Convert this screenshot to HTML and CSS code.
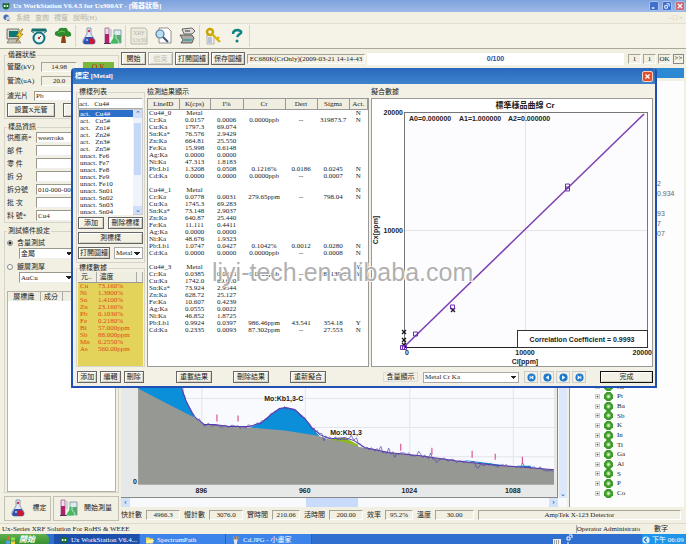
FILE: index.html
```
<!DOCTYPE html>
<html lang="zh-Hant">
<head>
<meta charset="utf-8">
<title>Ux WorkStation</title>
<link rel="stylesheet" href="styles.css">
</head>
<body>
<svg class="defs" aria-hidden="true">
  <symbol id="flask" viewBox="0 0 18 18">
    <path d="M7 1h4v6l4 6q1 4-2 4H5q-3 0-2-4l4-6z" fill="#dfe8f4" stroke="#7684a8" stroke-width=".8"/>
    <path d="M5.500 10h7l2.500 4q0 3-2 3H5q-3-1-1-4z" fill="#2d50b0"/>
    <path d="M9 11l5 1 1 3-2 2H9z" fill="#c81832"/><circle cx="9" cy="4" r="1.200" fill="#d03048"/>
    <circle cx="7" cy="13" r="1.200" fill="#8fb4f0"/>
  </symbol>
  <symbol id="lab" viewBox="0 0 18 18">
    <path d="M1 1h4v15H1z" fill="#f3d9ea" stroke="#8c5080" stroke-width=".7"/><path d="M1 7h4v9H1z" fill="#b02070"/>
    <path d="M0 16h8v1H0z" fill="#503050"/><path d="M6 2h2v8H6z" fill="#d0d0d8"/>
    <path d="M10 3h7v13h-7z" fill="#dcebee" stroke="#68808c" stroke-width=".7"/><path d="M10 8h7v8h-7z" fill="#58a878"/>
    <path d="M9 7h3v4l3 4q0 2-2 2H8q-3-1-1-3l2-3z" fill="#48b860" stroke="#e8fff0" stroke-width=".7"/>
  </symbol>
  <symbol id="gem" viewBox="0 0 10 10">
    <path d="M3 0h4l3 3v4L7 10H3L0 7V3z" fill="#3f9a2c"/><circle cx="5" cy="5" r="2.400" fill="#8bd070"/><circle cx="5" cy="5" r="1.200" fill="#e8f8e0"/>
  </symbol>
  <symbol id="alien" viewBox="0 0 10 10">
    <path d="M1 1l2 1q2-1 4 0l2-1 .5 4Q9 9 5 9.500 1 9 .5 5z" fill="#1c6a30"/><circle cx="3.300" cy="5" r="1.300" fill="#e8ffe8"/><circle cx="6.700" cy="5" r="1.300" fill="#e8ffe8"/>
  </symbol>
</svg>

<header class="titlebar">
  <svg class="i8"><use href="#alien"/></svg>
  <h1>Ux WorkStation V6.4.5 for Ux900AT - [儀器狀態]</h1>
  <div class="winbtns">
    <button aria-label="最小化"><svg viewBox="0 0 9 9"><path d="M2 6h3v1.500H2z" fill="#fff"/></svg></button>
    <button aria-label="還原"><svg viewBox="0 0 9 9"><path d="M4 2h3v3M2 4h3v3H2z" fill="none" stroke="#fff"/></svg></button>
    <button class="close" aria-label="關閉"><svg viewBox="0 0 9 9"><path d="M2 2l5 5M7 2L2 7" stroke="#fff" stroke-width="1.300"/></svg></button>
  </div>
</header>
<nav class="menubar">
  <svg class="i8" viewBox="0 0 10 10"><circle cx="4" cy="4" r="3.500" fill="#4a70b8"/><circle cx="6.500" cy="6" r="3" fill="#c8d4e8"/><path d="M5 8h3" stroke="#a04040"/></svg>
  <a href="#">系統</a><a href="#">查詢</a><a href="#">視窗</a><a href="#">說明(H)</a>
  <span class="mdi">- □ ×</span>
</nav>
<div class="toolbar">
  <button aria-label="儀器"><svg viewBox="0 0 18 18"><path d="M1 2h12v10H1z" fill="#d8d4c0" stroke="#555" stroke-width=".8"/><path d="M3 4h9v6H3z" fill="#087878"/><path d="M3 12h9l3 4H1z" fill="#c4c0ae" stroke="#666" stroke-width=".6"/><path d="M16 2l-6 7h3l-3 6 7-8h-3l3-5z" fill="#f6d820" stroke="#805c00" stroke-width=".6"/></svg></button>
  <button aria-label="校正"><svg viewBox="0 0 18 18"><path d="M2 2h14v2H2zM1 4l3 2M17 4l-3 2" fill="#127070" stroke="#127070"/><circle cx="9" cy="11" r="5.500" fill="#e8f6f6" stroke="#127080" stroke-width="2"/><path d="M9 11l2-2" stroke="#333"/><circle cx="9" cy="11" r="1.200" fill="#c03030"/></svg></button>
  <button aria-label="樹"><svg viewBox="0 0 18 18"><path d="M8 8h3l1 8H7z" fill="#8a4410"/><path d="M1 8q-1-4 3-4 1-4 6-3 3-1 4 3 4 1 3 5l-4 1-3-2-4 2-3-1z" fill="#2c8a30"/><path d="M4 6l3-2 4 1" stroke="#77be50" fill="none"/></svg></button>
  <i></i>
  <button aria-label="標定"><svg><use href="#flask"/></svg></button>
  <button aria-label="測量"><svg><use href="#lab"/></svg></button>
  <i></i>
  <button aria-label="XRF" disabled><svg viewBox="0 0 18 18"><path d="M1 1h14l2 2v14H1z" fill="#eeebdd" stroke="#bbb8aa"/><text x="3" y="8">XRF</text><text x="3" y="15">Ux30</text></svg></button>
  <button aria-label="查看"><svg viewBox="0 0 18 18"><path d="M5 1h9l3 3v12H5z" fill="#fff" stroke="#777" stroke-width=".8"/><circle cx="6" cy="7" r="4" fill="#b8e0f4" stroke="#5a7c98" stroke-width="1.200"/><path d="M9 10l5 5" stroke="#405880" stroke-width="2"/></svg></button>
  <button aria-label="列印"><svg viewBox="0 0 18 18"><path d="M4 2l10-1 3 3-3 3H6z" fill="#ddd" stroke="#444" stroke-width=".8"/><path d="M2 8h12l2 3-2 5H3l2-3z" fill="#aaaca8" stroke="#444" stroke-width=".8"/><path d="M5 14h8l1-2H6z" fill="#58a0a0"/><path d="M7 4h5" stroke="#333"/></svg></button>
  <i></i>
  <button aria-label="密碼"><svg viewBox="0 0 18 18"><path d="M3 8h7v9H3z" fill="#f4f4f4" stroke="#888" stroke-width=".6"/><path d="M4 11h4M4 13h4M4 15h4" stroke="#6878a8" stroke-width=".8"/><circle cx="6" cy="5" r="3" fill="none" stroke="#c8a400" stroke-width="2.400"/><path d="M8 7l8 8M13 12l2-2" stroke="#d8b410" stroke-width="2.400"/></svg></button>
  <button aria-label="說明"><svg viewBox="0 0 18 18"><path d="M5 7q0-4 5-4 4 1 3 3-3 2-4 4" fill="none" stroke="#0a8484" stroke-width="2.500"/><circle cx="9" cy="14" r="1.500" fill="#0a8484"/></svg></button>
  <i></i>
</div>

<main class="workspace">
  <aside class="side">
    <fieldset>
      <legend>儀器狀態</legend>
      <div class="row"><label for="kv">管壓(kV)</label><output id="kv" class="sunk">14.98</output><span class="ok">O K</span></div>
      <div class="row"><label for="ua">管流(uA)</label><output id="ua" class="sunk">20.0</output></div>
      <div class="row filter"><label for="flt">濾光片</label><select id="flt"><option>Pb</option></select></div>
      <div class="row two"><button class="btn">設置X光管</button><button class="btn">複位</button></div>
    </fieldset>
    <fieldset class="info">
      <legend>樣品資訊</legend>
      <div class="row"><label for="f1">供應商*</label><input id="f1" value="weerroks"></div>
      <div class="row"><label for="f2">部 件</label><input id="f2"></div>
      <div class="row"><label for="f3">零 件</label><input id="f3"></div>
      <div class="row"><label for="f4">拆 分</label><input id="f4"></div>
      <div class="row"><label for="f5">拆分號</label><input id="f5" value="010-000-000"></div>
      <div class="row"><label for="f6">批 次</label><input id="f6"></div>
      <div class="row"><label for="f7">料 號*</label><input id="f7" value="Cu4"></div>
    </fieldset>
    <fieldset class="cond">
      <legend>測試條件設定</legend>
      <label class="radio"><input type="radio" name="mode" checked>含量測試</label>
      <select aria-label="含量測試"><option>金屬</option></select>
      <label class="radio"><input type="radio" name="mode">鍍層測厚</label>
      <select aria-label="鍍層測厚"><option>AuCu</option></select>
      <div class="layers"><table><thead><tr><th>層標識</th><th class="mid-th">成分</th><th></th></tr></thead></table></div>
    </fieldset>
    <div class="bigs">
      <button><svg><use href="#flask"/></svg>標定</button>
      <button><svg><use href="#lab"/></svg>開始測量</button>
    </div>
  </aside>

  <section class="work">
    <div class="cmds">
      <button class="btn">開始</button><button class="btn" disabled>結束</button><button class="btn wide">打開圖譜</button><button class="btn wide">保存圖譜</button>
      <output class="sunk name">EC680K(CrOnly)(2009-03-21 14-14-43</output>
      <div class="progress">0/100</div>
      <span class="sunk n">1</span><span class="sunk n">1</span><span class="sunk n">OK</span><button class="more">&gt;&gt;</button>
    </div>
    <div class="strip"></div>
    <div class="panes">
      <div class="spectrum">
        <svg class="plot" viewBox="122 82 434 414">
          <rect x="122" y="82" width="434" height="414" fill="#e7e9e9"/>
          <rect x="139" y="82" width="414" height="402" fill="#f9fafe"/>
          <path d="M139 398H553M139 427H553M139 456H553M202.500 82V484M305.500 82V484M409.500 82V484M512.500 82V484" stroke="#e3e5ea"/>
          <path d="M139 387V380H179L182 387 187 401 195 417 205 425 139 389zM250 427L262 422 270 415 280 408 286 407 295 409 305 418 312 427 320 436zM460 459L470 460 500 464 500 466zM516 465H530V468z" fill="#0b8fd8"/>
          <path d="M318 435L328 439 334 438 345 437 358 444 358 448 318 440z" fill="#8db820"/>
          <path d="M139 388L160 399 195 417 205 424 215 424 230 426 250 427 285 430 318 435 330 439 343 441 358 446 375 449 390 452 420 455 455 460 490 464 530 467 553 469V484H139z" fill="#969894"/>
          <path id="fit" d="M179 380L182 387 187 401 195 416 205 424 215 424 230 426 250 426 262 422 270 415 280 408 286 407 295 409 305 418 312 427 320 434 330 438 345 437 354 440 365 447 390 452 420 455 455 460 490 464 530 467 553 469" fill="none" stroke="#6034a8"/>
          <path id="raw" fill="none" stroke="#4b48b8" stroke-width=".7"/>
          <path d="M217.500 414v7M238.500 415v6M400.500 443v7M431.500 447v7M471.500 450v7M494.500 453v6M521.500 456v7" stroke="#d83880"/>
          <g class="axis"><text x="284" y="401">Mo:Kb1,3-C</text><text x="346" y="434">Mo:Kb1,3</text>
          <text x="202" y="492">896</text><text x="305" y="492">960</text><text x="409" y="492">1024</text><text x="512" y="492">1088</text><text x="136" y="483">0</text></g>
        </svg>
        <div class="vscroll"><span>⌄</span></div>
        <div class="hscroll"><span>‹</span><b></b><span>›</span></div>
      </div>
      <div class="tree">
        <div class="vals"><span>2</span><span>0.934</span><span></span><span>93</span><span>7</span><span>07</span></div>
        <ul id="elements"></ul>
      </div>
    </div>
    <div class="readouts">
      <span>快計數</span><output class="sunk">4966.3</output><span>慢計數</span><output class="sunk">3076.0</output><span>實時間</span><output class="sunk short">210.06</output><span>活時間</span><output class="sunk">200.00</output><span>效率</span><output class="sunk short">95.2%</output><span>溫度</span><output class="sunk long">30.00</output><output class="sunk det">AmpTek X-123 Detector</output>
    </div>
  </section>
</main>

<footer class="status"><span>Ux-Series XRF Solution For RoHS &amp; WEEE</span><span class="op">Operator Administrato</span><span class="num">數字</span></footer>
<div class="taskbar">
  <button class="start"><svg viewBox="0 0 10 10"><path d="M1 2q2-1 3 0v3q-1-1-3 0z" fill="#f06030"/><path d="M5 2q2 1 4 0v3q-2 1-4 0z" fill="#90d850"/><path d="M0 6q2-1 4 0v3q-2-1-4 0z" fill="#50a0f8"/><path d="M5 6q2 1 4 0v3q-2 1-4 0z" fill="#f8d040"/></svg>開始</button>
  <button class="task on"><svg class="i8"><use href="#alien"/></svg>Ux WorkStation V6.4...</button>
  <button class="task"><svg class="i8" viewBox="0 0 10 10"><path d="M0 2h4l1 1h4v6H0z" fill="#f6d860"/><path d="M2 5h8L8 9H0z" fill="#fff0a0"/></svg>SpectrumPath</button>
  <button class="task"><svg class="i8" viewBox="0 0 10 10"><path d="M2 4h5l-1 6H3z" fill="#e8e8f0"/><path d="M3 5L2 0M5 5l1-5M6 5l3-4" stroke="#e8a040"/></svg>Cd.JPG - 小畫家</button>
  <svg class="kbd" viewBox="0 0 22 12"><path d="M1 5h8v5H1z" fill="#eee"/><path d="M2 7h6M2 9h6" stroke="#555" stroke-dasharray="1 1"/><path d="M15 3h3v3h-3zM17 1h3v3M16 8v3" stroke="#fff" fill="none"/></svg>
  <div class="tray"><svg class="i8" viewBox="0 0 10 10"><circle cx="5" cy="5" r="4.500" fill="#d8efff"/><path d="M6 2L3 5l3 3" stroke="#1870c8" fill="none" stroke-width="1.500"/></svg>下午 06:09</div>
</div>

<section class="dialog" role="dialog" aria-labelledby="dt">
  <header><h2 id="dt">標定 [Metal]</h2><button aria-label="關閉"><svg viewBox="0 0 11 11"><path d="M3 3l5 5M8 3L3 8" stroke="#fff" stroke-width="1.500"/></svg></button></header>
  <div class="body">
    <div class="c1">
      <fieldset class="stds">
        <legend>標樣列表</legend>
        <input aria-label="標樣" value="act.   Cu4#">
        <div class="lb"><select id="std" size="15" aria-label="標樣列表"></select><div class="sb"><span>⌃</span><b></b><span>⌄</span></div></div>
        <div class="r"><button class="btn">添加</button><button class="btn grow">刪除標樣</button></div>
        <div class="r"><button class="btn grow">測標樣</button></div>
        <div class="r"><button class="btn open">打開圖譜</button><select aria-label="材料" class="mat"><option>Metal</option></select></div>
      </fieldset>
      <fieldset class="data">
        <legend>標樣數據</legend>
        <div class="yellow"><table><thead><tr><th>元..</th><th>濃度</th><th></th></tr></thead><tbody id="conc"></tbody></table></div>
      </fieldset>
      <div class="foot three"><button class="btn">添加</button><button class="btn">編輯</button><button class="btn">刪除</button></div>
    </div>
    <div class="c2">
      <h3>檢測結果顯示</h3>
      <div class="box"><table class="results"><colgroup><col class="w31"><col class="w31"><col class="w33"><col class="w42"><col class="w32"><col class="w32"><col></colgroup><thead><tr><th>LineID</th><th>K(cps)</th><th>I%</th><th>Cr</th><th>Dert</th><th>Sigma</th><th>Act.</th></tr></thead><tbody id="res"></tbody></table></div>
      <div class="foot mid"><button class="btn">重載結果</button><button class="btn">刪除結果</button><button class="btn">重新擬合</button></div>
    </div>
    <div class="c3">
      <h3>擬合數據</h3>
      <div class="box"><svg viewBox="372 99 280 267">
        <rect x="404.500" y="112.500" width="243" height="235" fill="#fcfcfe" stroke="#777"/>
        <path d="M525.500 113V347M405 230.500H647" stroke="#e4e4ea"/>
        <path d="M404 347.500H648" stroke="#222"/>
        <path d="M404 347L644 114" stroke="#7a3cb0" stroke-width="1.500"/>
        <path d="M402 330l4 4M406 330l-4 4M402 338l4 4M406 338l-4 4M402 343l4 4M406 343l-4 4M451 308l4 4M455 308l-4 4" stroke="#111" stroke-width="1.200"/>
        <path d="M565.500 184h4v4h-4zM565.500 187h4v4h-4zM413.500 332h4v4h-4zM450.500 305h4v4h-4zM400.500 345.500h4v4h-4zM402.500 345.500h4v4h-4z" fill="none" stroke="#6a2cb0"/>
        <rect x="517.500" y="330.500" width="130" height="17" fill="#fff" stroke="#333"/>
        <g class="ct"><text class="ti" x="525" y="108">標準樣品曲線 Cr</text><text class="e" x="403" y="115">20000</text><text class="e" x="403" y="233">10000</text>
        <text class="s" x="409" y="121">A0=0.000000</text><text class="s" x="459" y="121">A1=1.000000</text><text class="s" x="508" y="121">A2=0.000000</text>
        <text x="407" y="355">0</text><text x="525" y="355">10000</text><text class="e" x="652" y="355">20000</text><text x="525" y="364">Ci[ppm]</text><text x="582" y="342">Correlation Coefficient = 0.9993</text>
        <text transform="rotate(-90 378 230)" x="378" y="230">Cx[ppm]</text></g>
      </svg></div>
      <div class="foot end"><label for="cont">含量顯示</label><select id="cont"><option>Metal Cr Ka</option></select>
        <button class="nav" aria-label="第一"><svg viewBox="0 0 10 10"><circle cx="5" cy="5" r="4.500"/><path d="M7 2.500v5L4 5zM3 3h1v4H3z"/></svg></button>
        <button class="nav" aria-label="上一"><svg viewBox="0 0 10 10"><circle cx="5" cy="5" r="4.500"/><path d="M6.500 2.500v5L3 5z"/></svg></button>
        <button class="nav" aria-label="下一"><svg viewBox="0 0 10 10"><circle cx="5" cy="5" r="4.500"/><path d="M3.500 2.500v5L7 5z"/></svg></button>
        <button class="nav" aria-label="最後"><svg viewBox="0 0 10 10"><circle cx="5" cy="5" r="4.500"/><path d="M3 2.500v5L6 5zM6 3h1v4H6z"/></svg></button>
        <button class="btn done">完成</button></div>
    </div>
  </div>
</section>
<div class="watermark">liyi-tech.en.alibaba.com</div>
<script src="script.js"></script>
</body>
</html>
```
FILE: styles.css
```
* { box-sizing: border-box; }
body {
  margin: 0; min-height: 100vh; display: flex; flex-direction: column; position: relative; overflow-x: hidden;
  background: #f2f0e3; color: #222;
  font: 7px/8px "Liberation Serif", "Noto Sans CJK TC", serif;
}
button, input, select, output { font: inherit; color: inherit; margin: 0; padding: 0; border-radius: 0; }
h1, h2, h3, ul { margin: 0; padding: 0; font: inherit; }
ul { list-style: none; }
svg { display: block; }
.defs { position: absolute; width: 0; height: 0; }
.i8 { width: 8px; height: 8px; flex: none; }
fieldset { margin: 0; min-width: 0; padding: 0 4px; border: 1px solid #d6d4c6; }
legend { padding: 0 1px; margin-left: 0; line-height: 8px; }
table { border-collapse: collapse; table-layout: fixed; width: 100%; }
th, td { padding: 0; font-weight: 400; }

.titlebar { height: 12px; flex: none; display: flex; align-items: center; gap: 3px; padding: 0 1px 0 2px; background: linear-gradient(#7ea2de, #9db9e6); color: #fff; }
.titlebar h1 { flex: 1; font-size: 7px; font-weight: 700; white-space: nowrap; }
.winbtns { display: flex; gap: 3px; }
.winbtns button { width: 10px; height: 10px; border: 1px solid #a9c1ee; border-radius: 2px; background: #3f6fcd; }
.winbtns .close { background: #cd6470; }
.winbtns svg { width: 100%; height: 100%; }
.menubar { height: 12px; flex: none; display: flex; align-items: center; gap: 5px; padding: 0 3px; border-bottom: 1px solid #e2e0d3; }
.menubar a { color: #b5b3a6; text-decoration: none; }
.mdi { margin-left: auto; color: #c4c2b6; white-space: pre; }
.toolbar { height: 24px; flex: none; display: flex; align-items: center; padding-left: 3px; background: #f5f3e8; }
.toolbar button { width: 24px; height: 22px; border: 0; background: none; display: grid; place-items: center; }
.toolbar button svg { width: 18px; height: 18px; }
.toolbar text { font-size: 6px; fill: #b8b5a6; }
.toolbar i { width: 2px; height: 22px; border-left: 1px solid #d8d6c8; }

.workspace { flex: 1; display: grid; grid-template-columns: 119px minmax(0, 1fr); gap: 2px; border-top: 1px solid #aaa898; }
.side { display: flex; flex-direction: column; padding: 2px 0 2px 4px; }
.row { display: flex; align-items: center; height: 14px; }
.row label { flex: none; width: 34px; white-space: pre; }
.sunk { border: 1px solid; border-color: #a5a394 #fff #fff #a5a394; text-align: center; line-height: 8px; height: 10px; white-space: nowrap; overflow: hidden; }
.side .row .sunk { width: 36px; }
.ok { margin-left: 6px; width: 31px; height: 11px; background: #78b83c; color: #d02010; text-align: center; font-size: 8px; line-height: 11px; }
.side input:not([type]), .side select { flex: 1; min-width: 0; height: 10px; background-color: #fff; border: 1px solid; border-color: #99988a #eee #eee #99988a; padding-left: 1px; }
.side select, .mat, #cont {
  appearance: none;
  background: #fff linear-gradient(45deg, transparent 50%, #222 50%) right 5px center / 3px 3px no-repeat;
  background-image: linear-gradient(45deg, transparent 50%, #222 50%), linear-gradient(-45deg, transparent 50%, #222 50%);
  background-position: right 5px center, right 2px center;
}
.side .filter { height: 15px; }
.filter label { width: 27px; }
.two { gap: 8px; }
.two .btn { flex: none; width: 48px; height: 14px; }
.btn { border: 1px solid #666; background: #f3f1e5; height: 12px; line-height: 8px; white-space: nowrap; text-align: center; box-shadow: inset 1px 1px #fff, inset -1px -1px #d5d3c5; }
.btn:disabled { color: #c5c3b5; border-color: #aaa; }
.side fieldset:first-child { padding: 1px 2px; margin-bottom: 4px; }
.info { padding: 0 2px; }
.info .row { height: 13px; }
.info .row label { width: 29px; }
.info input:not([type]) { height: 11px; }
.cond { margin-top: 4px; padding: 2px 2px 0; flex: 1; display: flex; flex-direction: column; }
.side .cond > select { flex: none; height: 11px; margin: 0 0 2px 12px; width: 56px; }
.radio { display: flex; align-items: center; gap: 4px; height: 11px; }
.radio input { appearance: none; width: 6px; height: 6px; border: 1px solid #888; border-radius: 50%; background: #fff; }
.radio input:checked { background: radial-gradient(#222 1px, #fff 2px); }
.layers { margin-top: 6px; background: #fff; flex: 1; border: 1px solid #b5b3a5; }
.layers th { height: 9px; width: 32px; background: #f0eee0; border-right: 1px solid #aaa; }
.layers .mid-th { width: 22px; }
.layers th:last-child { width: auto; }
.bigs { display: grid; grid-template-columns: 47px 1fr; gap: 2px; margin-top: 3px; }
.bigs button { height: 25px; display: flex; align-items: center; justify-content: center; gap: 6px; background: none; border: 1px solid #c3c1b3; }
.bigs svg { width: 18px; height: 18px; flex: none; }

.work { display: flex; flex-direction: column; min-width: 0; }
.cmds { display: flex; gap: 2px; align-items: center; height: 19px; flex: none; padding-right: 2px; }
.cmds .btn { width: 25px; height: 13px; flex: none; }
.cmds .wide { width: 34px; }
.name { width: 118px; flex: none; }
.progress { flex: 1; height: 12px; line-height: 12px; background: #fff; color: #2b4ea8; text-align: center; font-family: "Liberation Sans", sans-serif; font-weight: 700; margin-right: 2px; }
.n { width: 13px; flex: none; }
.more { width: 11px; height: 10px; line-height: 7px; border: 1px solid #888; background: #f3f1e5; }
.strip { height: 11px; flex: none; background: #2d8ad2; margin-right: 2px; border-bottom: 1px solid #f3f1e5; }
.panes { flex: 1; display: grid; grid-template-columns: minmax(0, 1fr) 117px; gap: 2px; padding-top: 2px; }
.spectrum { display: grid; grid-template-columns: minmax(0, 1fr) 9px; grid-template-rows: 1fr 9px; }
.plot { width: 100%; border-right: 1px solid #888; border-bottom: 1px solid #888; }
.axis text { font: 700 7px "Liberation Sans", sans-serif; text-anchor: middle; fill: #222; }
.vscroll { background: #dce8fa; display: flex; align-items: flex-end; justify-content: center; color: #2850a8; border-left: 1px solid #f4f4f4; }
.hscroll { display: flex; background: #f8f9fd; color: #2850a8; line-height: 7px; grid-column: 1 / 3; padding-right: 9px; }
.hscroll span { width: 9px; text-align: center; background: #d3e2fb; font-size: 9px; }
.hscroll b { width: 52px; margin-left: 176px; margin-right: auto; background: #c9dbfa; }
.tree { background: #fcfdfc; border-left: 1px solid #99978a; margin-right: 2px; display: flex; flex-direction: column; }
.vals { padding: 98px 0 0 87px; }
.vals span { display: block; height: 10px; line-height: 10px; color: #666; font-family: "Liberation Sans", sans-serif; }
#elements { display: grid; grid-template-rows: repeat(12, 1fr); height: 116px; margin: auto 0 9px 25px; }
#elements li { display: flex; align-items: center; gap: 4px; }
#elements i { width: 5px; height: 5px; border: 1px solid #ccc; font: 5px/3px "Liberation Sans", sans-serif; text-align: center; }
#elements svg { width: 9px; height: 9px; }
.readouts { height: 16px; flex: none; display: flex; align-items: center; gap: 4px; padding-right: 5px; white-space: nowrap; }
.readouts .sunk { flex: 0 1 34px; }
.readouts .short { flex-basis: 28px; }
.readouts .long { flex-basis: 39px; }
.readouts .det { flex: 1 0 190px; }

.status { height: 11px; flex: none; display: flex; align-items: center; gap: 6px; padding: 0 2px; border-top: 1px solid #dddbcd; }
.op { margin-left: auto; border-left: 1px solid #aaa; }
.num { padding: 0 16px 0 8px; }
.taskbar { height: 12px; flex: none; display: flex; color: #fff; background: #2f6fd0; }
.taskbar button { border: 0; display: flex; align-items: center; gap: 3px; white-space: nowrap; }
.taskbar .start { width: 49px; margin-right: 5px; padding-left: 6px; background: linear-gradient(#5fb04d, #2f8a2c); border-radius: 0 5px 5px 0; font-style: italic; font-weight: 700; font-size: 8px; }
.start svg { width: 10px; height: 10px; }
.taskbar .task { width: 86px; padding-left: 6px; background: #3c84ea; border-right: 1px solid #2860c0; }
.taskbar .on { background: #1d4fac; }
.kbd { width: 22px; height: 12px; margin-left: auto; margin-right: 68px; }
.tray { width: 44px; display: flex; align-items: center; gap: 2px; background: #1e95e8; white-space: nowrap; }

.dialog { position: absolute; left: 71px; right: 29px; top: 68px; background: #f3f1e5; border: 2px solid #2050b4; border-top: 0; border-radius: 4px 4px 0 0; overflow: hidden; }
.dialog > header { height: 16px; display: flex; align-items: center; padding: 0 2px; background: linear-gradient(#2a68bd, #3c84cc); color: #fff; }
.dialog h2 { flex: 1; font-weight: 700; font-size: 7px; }
.dialog > header button { width: 11px; height: 11px; border: 1px solid #f3d0c0; border-radius: 2px; background: #e05030; }
.dialog > header svg { width: 100%; height: 100%; }
.body { display: grid; grid-template-columns: 69px 222px minmax(0, 1fr); gap: 2px; padding: 4px 2px 3px 3px; }
.c1, .c2, .c3 { display: flex; flex-direction: column; }
h3 { height: 10px; line-height: 8px; }
.box { flex: 1; background: #fff; border: 1px solid #999; }
.foot { height: 12px; margin-top: 4px; display: flex; align-items: center; }
.c1 fieldset { padding: 0 1px; }
.stds { height: 175px; }
.stds input { display: block; width: 100%; height: 11px; margin-top: 2px; border: 1px solid #aaa; border-right-color: #eee; background: #fff; white-space: pre; }
.lb { display: flex; height: 106px; background: #fff; border: 1px solid #ccc; margin-bottom: 2px; }
.lb select { appearance: none; flex: 1; min-width: 0; border: 0; overflow: hidden; background: #fff; height: 105px; outline: 0; scrollbar-width: none; }
.lb option { height: 7px; min-height: 0; line-height: 7px; padding: 0 0 0 1px; white-space: pre; }
.lb option:checked { background: #2c6fc8 linear-gradient(#2c6fc8, #2c6fc8); color: #fff; }
.sb { width: 9px; background: #eef3fc; color: #2850a8; display: flex; flex-direction: column; justify-content: space-between; align-items: center; }
.sb span { width: 100%; height: 8px; background: #cfdffa; text-align: center; }
.sb b { width: 7px; height: 52px; background: #c6d8f8; margin-bottom: 26px; }
.r { display: flex; gap: 4px; margin-bottom: 3px; }
.r .btn { min-width: 26px; height: 12px; }
.r .open { width: 32px; flex: none; }
.grow { flex: 1; }
.mat { flex: 1; min-width: 0; border: 1px solid #aaa; padding-left: 1px; }
.data { flex: 1; margin-top: 1px; display: flex; flex-direction: column; }
.yellow { background: #e3d35a; flex: 1; color: #e04818; }
.yellow th { height: 10px; background: #f0eee0; color: #222; text-align: left; padding-left: 3px; border-right: 1px solid #aaa; border-bottom: 1px solid #999; }
.yellow th:first-child { width: 18px; }
.yellow th:last-child { width: 6px; }
.yellow td { height: 7px; line-height: 7px; padding-left: 2px; white-space: nowrap; }
.three { gap: 3px; padding: 0 1px; }
.three .btn { flex: 1; }
.w31 { width: 31px; } .w32 { width: 32px; } .w33 { width: 33px; } .w42 { width: 42px; }
.results th { height: 10px; background: #f0eee0; border-right: 1px solid #999; border-bottom: 1px solid #999; }
.results td { height: 7px; line-height: 7px; text-align: center; white-space: nowrap; }
.results td:first-child { text-align: left; padding-left: 1px; }
.mid { gap: 21px; padding-left: 29px; }
.mid .btn { width: 36px; }
.box svg { width: 100%; }
.ct text { font: 700 7px "Liberation Sans", "Noto Sans CJK TC", sans-serif; text-anchor: middle; fill: #222; }
.ct .e { text-anchor: end; }
.ct .s { text-anchor: start; }
.ct .ti { font-size: 8px; }
.end { gap: 2px; }
.end label { width: 35px; margin-left: 12px; margin-right: 3px; text-align: center; border: 1px solid #ddd; }
#cont { width: 96px; height: 11px; border: 1px solid #aaa; padding-left: 1px; margin-right: 3px; }
.nav { width: 14px; height: 12px; border: 1px solid #ccc; background: #f3f1e5; padding: 0; display: grid; place-items: center; }
.nav svg { width: 9px; height: 9px; }
.nav circle { fill: #1979cc; }
.nav path { fill: #fff; }
.done { width: 53px; margin-left: auto; border-color: #111; }
.watermark { position: absolute; left: 212px; top: 258px; font: 25px/28px "Liberation Sans", sans-serif; color: rgba(150, 150, 150, .75); text-shadow: 1px 1px #fff, -1px -1px rgba(255, 255, 255, .6); pointer-events: none; white-space: nowrap; }
```
FILE: script.js
```
const $ = id => document.getElementById(id);
const standards = ["act. Cu4#", "act. Cu5#", "act. Zn1#", "act. Zn2#", "act. Zn3#", "act. Zn5#", "unact. Fe6", "unact. Fe7", "unact. Fe8", "unact. Fe9", "unact. Fe10", "unact. Sn01", "unact. Sn02", "unact. Sn03", "unact. Sn04"];
$("std").innerHTML = standards.map((s, i) => `<option${i ? "" : " selected"}>${s.replace(/^act. /, "act.&nbsp;&nbsp;&nbsp;")}</option>`).join("");

const conc = "Cu 73.160%|Ni 1.3900%|Sn 1.4100%|Zn 23.160%|Pb 0.1030%|Fe 0.2180%|Bi 57.000ppm|Sb 88.000ppm|Mn 0.2550%|As 560.00ppm";
$("conc").innerHTML = conc.split("|").map(r => "<tr>" + r.split(" ").map(c => `<td>${c}</td>`).join("") + "</tr>").join("");

const results = `Cu4#_0,Metal,,,,,N
Cr:Ka,0.0157,0.0006,0.0000ppb,--,319873.7,N
Cu:Ka,1797.3,69.074
Sn:Ka*,76.576,2.9429
Zn:Ka,664.81,25.550
Fe:Ka,15.998,0.6148
Ag:Ka,0.0000,0.0000
Ni:Ka,47.313,1.8183
Pb:Lb1,1.3208,0.0508,0.1216%,0.0186,0.0245,N
Cd:Ka,0.0000,0.0000,0.0000ppb,--,0.0007,N

Cu4#_1,Metal,,,,,N
Cr:Ka,0.0778,0.0031,279.65ppm,--,798.04,N
Cu:Ka,1745.3,69.283
Sn:Ka*,73.148,2.9037
Zn:Ka,640.87,25.440
Fe:Ka,11.111,0.4411
Ag:Ka,0.0000,0.0000
Ni:Ka,48.676,1.9323
Pb:Lb1,1.0747,0.0427,0.1042%,0.0012,0.0280,N
Cd:Ka,0.0000,0.0000,0.0000ppb,--,0.0008,N

Cu4#_3,Metal,,,,,Y
Cr:Ka,0.0385,0.0015,0.0000ppb,--,287139.2,Y
Cu:Ka,1742.0,69.620
Sn:Ka*,73.924,2.9544
Zn:Ka,628.72,25.127
Fe:Ka,10.607,0.4239
Ag:Ka,0.0555,0.0022
Ni:Ka,46.852,1.8725
Pb:Lb1,0.9924,0.0397,986.46ppm,43.541,354.18,Y
Cd:Ka,0.2335,0.0093,87.302ppm,--,27.553,N`;
$("res").innerHTML = results.split("\n").map(r => {
  const c = r.split(",");
  while (c.length < 7) c.push("");
  return "<tr>" + c.map(v => `<td>${v}</td>`).join("") + "</tr>";
}).join("");

$("elements").innerHTML = "Ni Pt Ba Sb K In Ti Ga Al S P Co".split(" ")
  .map(e => `<li><i>+</i><svg><use href="#gem"/></svg>${e}</li>`).join("");

// Raw counts scatter around the fitted curve.
const fit = $("fit"), len = fit.getTotalLength();
let seed = 7, d = "";
for (let s = 12; s < len; s += 2) {
  seed = (seed * 16807) % 2147483647;
  const r = seed / 2147483647 - 0.5, p = fit.getPointAtLength(s);
  d += (d ? "L" : "M") + p.x.toFixed(1) + " " + (p.y + r * (Math.abs(r) > 0.46 ? 9 : 4)).toFixed(1);
}
$("raw").setAttribute("d", d);
```
